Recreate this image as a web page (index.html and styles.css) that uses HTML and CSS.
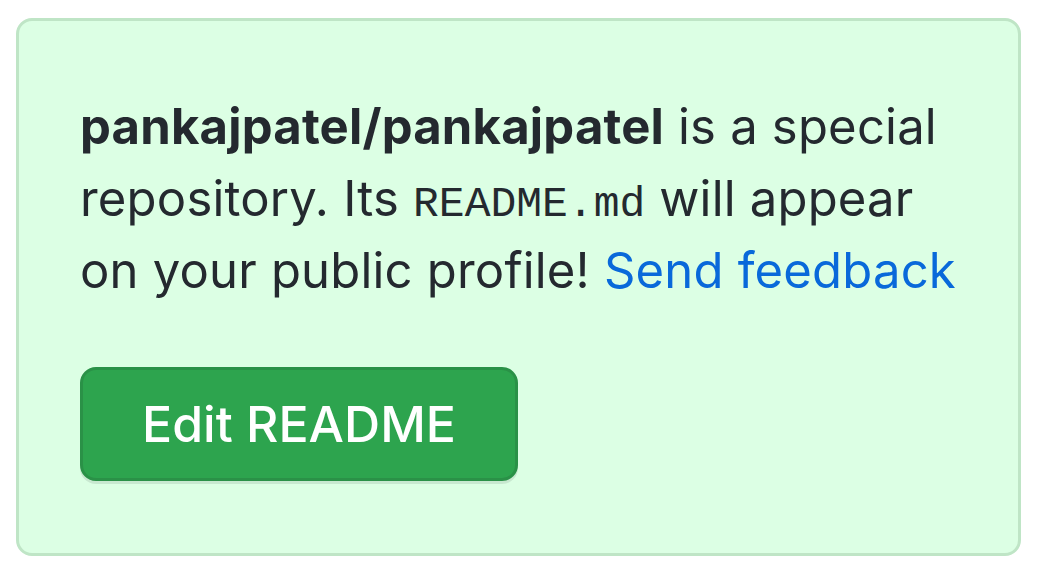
FILE: index.html
```html
<!DOCTYPE html>
<html lang="en">
<head>
  <meta charset="UTF-8">
  <title>Special repository</title>
  <link rel="stylesheet" href="styles.css">
</head>
<body>
  <div class="flash-special">
    <p class="flash-text">
      <strong>pankajpatel/pankajpatel</strong> is a special repository. Its <code>README.md</code> will appear on your public profile! <a href="#" class="feedback-link">Send feedback</a>
    </p>
    <a href="#" class="btn-primary">Edit README</a>
  </div>
</body>
</html>
```

FILE: styles.css
```css
html,
body {
  margin: 0;
  padding: 0;
  background: #ffffff;
}
body {
  padding: 18px 17px 18px 16px;
  font-family: Inter, "Noto Sans", sans-serif;
  color: #24292f;
}
.flash-special {
  background-color: #dcffe4;
  border: 3px solid #bfe5c6;
  border-radius: 16px;
  padding: 70px 48px 72px 61px;
  height: 538px;
  box-sizing: border-box;
}
.flash-text {
  margin: 0 0 60px;
  font-size: 49px;
  line-height: 72px;
  letter-spacing: 0.2px;
}
.flash-text strong {
  font-weight: 700;
}
.flash-text code {
  font-family: "Liberation Mono", "DejaVu Sans Mono", monospace;
  font-size: 43px;
  line-height: 1;
  letter-spacing: 0;
}
.feedback-link {
  color: #0969da;
  text-decoration: none;
}
.btn-primary {
  display: flex;
  align-items: center;
  justify-content: center;
  width: 438px;
  height: 114px;
  box-sizing: border-box;
  background-color: #2da44e;
  border: 3px solid #2a9147;
  border-radius: 16px;
  box-shadow: 0 3px 0 rgba(27, 31, 36, 0.1);
  color: #ffffff;
  font-size: 50px;
  font-weight: 500;
  text-decoration: none;
}
```
